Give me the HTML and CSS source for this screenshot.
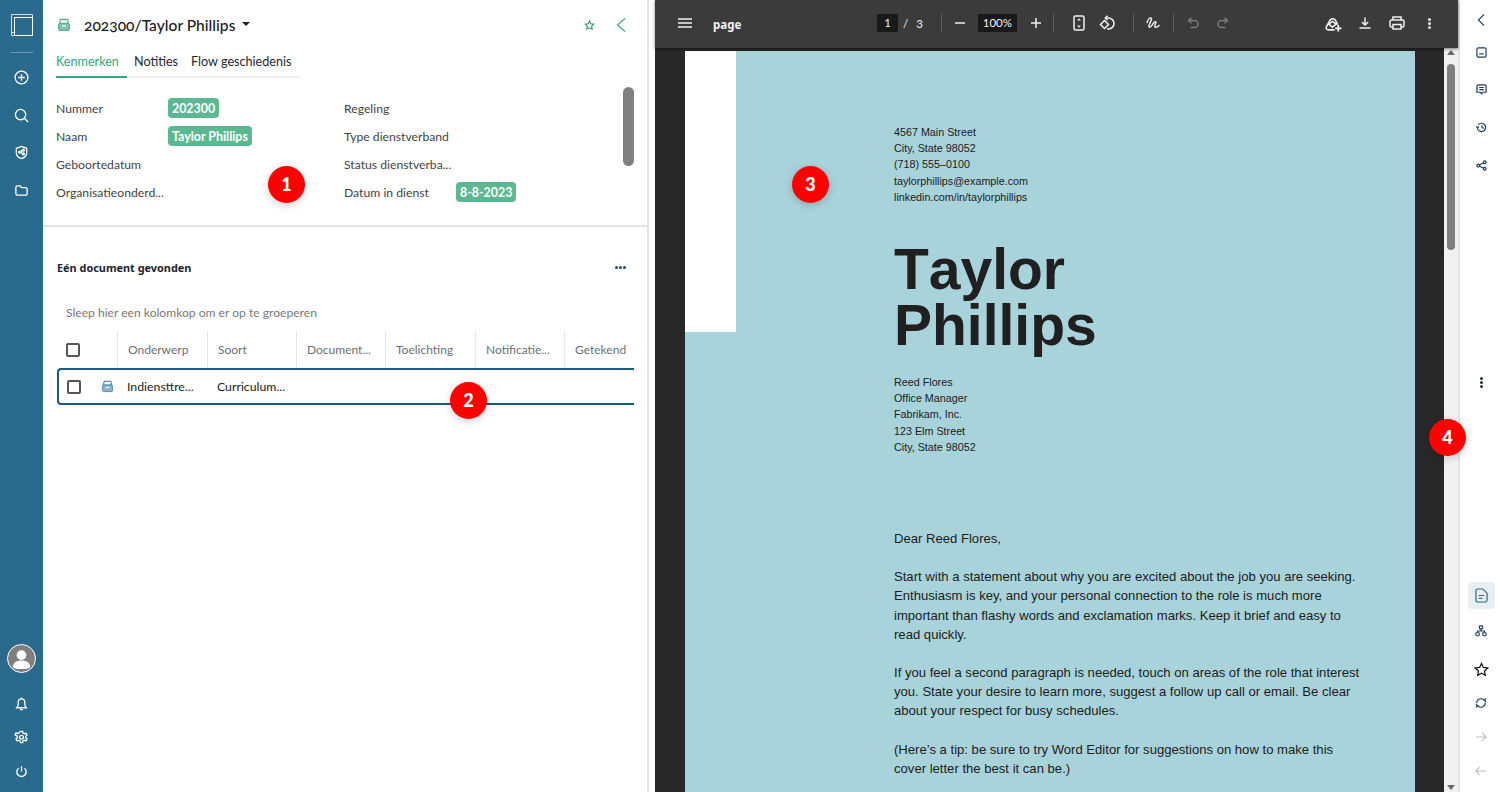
FILE: index.html
```html
<!DOCTYPE html>
<html lang="en">
<head>
    <meta charset="UTF-8">
    <title>202300/Taylor Phillips</title>
    <link rel="stylesheet" href="styles.css">
</head>
<body>
    <nav class="sidebar">
        <svg class="logo" viewBox="0 0 22 22" width="22" height="22"><path d="M.5 21.500V.5h21v21z M.5 18.500h3" fill="none" stroke="#cfe0e8" stroke-width="1"/><rect x="3.500" y="3.500" width="18" height="18" fill="none" stroke="#fff" stroke-width="1"/></svg>
        <div class="sidebar-rule"></div>
        <div class="sidebar-group">
            <svg class="side-icon" viewBox="0 0 16 16"><circle cx="8" cy="8" r="6.800"/><path d="M8 4.500v7M4.500 8h7"/></svg>
            <svg class="side-icon" viewBox="0 0 16 16"><circle cx="7" cy="7" r="5.500"/><path d="M11 11l4 4"/></svg>
            <svg class="side-icon" viewBox="0 0 16 16"><path d="M8 1.500l5.500 2v5c0 3-2.500 5-5.500 6-3-1-5.500-3-5.500-6v-5z"/><circle cx="10" cy="5.500" r="1"/><circle cx="6" cy="7.500" r="1"/><circle cx="10" cy="9.500" r="1"/><path d="M9 6L7 7M7 8l2 1"/></svg>
            <svg class="side-icon" viewBox="0 0 16 16"><path d="M2 4.500a1.500 1.500 0 0 1 1.500-1.500h3l1.500 2h4.500a1.500 1.500 0 0 1 1.500 1.500v5a1.500 1.500 0 0 1-1.500 1.500h-9a1.500 1.500 0 0 1-1.500-1.500z"/></svg>
        </div>
        <div class="sidebar-bottom">
            <div class="avatar">
                <svg viewBox="0 0 28 28" width="27" height="27"><circle cx="14" cy="10.500" r="5" fill="#fff"/><path d="M5 23c0-5 4-7 9-7s9 2 9 7c-2 1.500-5 2-9 2s-7-.5-9-2z" fill="#fff"/></svg>
            </div>
            <svg class="side-icon" viewBox="0 0 16 16"><path d="M3 12.500c1-1 1.500-2 1.500-4V6.500a3.500 3.500 0 0 1 7 0v2c0 2 .5 3 1.500 4z"/><path d="M6.500 14.500h3M8 1.500v1.500"/></svg>
            <svg class="side-icon" viewBox="0 0 16 16"><path d="M6.800 1.500h2.400l.4 1.900 1.300.7 1.800-.7 1.200 2.100-1.400 1.300v1.400l1.400 1.300-1.200 2.100-1.800-.7-1.300.7-.4 1.900H6.800l-.4-1.900-1.300-.7-1.800.7-1.200-2.100 1.400-1.300V6.500L1.100 5.200l1.200-2.100 1.800.7 1.300-.7z"/><circle cx="8" cy="7.800" r="2"/></svg>
            <svg class="side-icon" viewBox="0 0 16 16"><path d="M8 2.500V8M4.800 4.500a5 5 0 1 0 6.400 0"/></svg>
        </div>
    </nav>

    <main class="panel">
        <section class="details">
            <header class="title-row">
                <svg class="cabinet" viewBox="0 0 14 14" width="14" height="14"><path d="M3.500 1.500h7l1 4h-9z" fill="none" stroke="#5bb592" stroke-width="1.300"/><rect x="1.500" y="5.500" width="11" height="7" rx="1.500" fill="#7fc4aa" stroke="#5bb592"/><path d="M5 8h4" stroke="#fff" stroke-width="1.200"/></svg>
                <h1 class="title">202300/Taylor Phillips</h1>
                <span class="caret"></span>
                <span class="title-actions">
                    <svg viewBox="0 0 12 12" width="11" height="11"><path d="M6 1.200l1.400 3 3.300.4-2.400 2.200.6 3.300L6 8.500l-2.900 1.600.6-3.300L1.300 4.600l3.300-.4z" fill="none" stroke="#2f9a79" stroke-width="1.200"/></svg>
                    <svg viewBox="0 0 10 16" width="10" height="16"><path d="M9 1.500L1.500 8 9 14.500" fill="none" stroke="#3aa884" stroke-width="1.200"/></svg>
                </span>
            </header>
            <div class="tabs">
                <a class="tab tab-active">Kenmerken</a>
                <a class="tab">Notities</a>
                <a class="tab">Flow geschiedenis</a>
            </div>
            <div class="fields">
                <div class="field"><span class="field-label">Nummer</span><span class="tag">202300</span></div>
                <div class="field"><span class="field-label">Regeling</span></div>
                <div class="field"><span class="field-label">Naam</span><span class="tag">Taylor Phillips</span></div>
                <div class="field"><span class="field-label">Type dienstverband</span></div>
                <div class="field"><span class="field-label">Geboortedatum</span></div>
                <div class="field"><span class="field-label">Status dienstverba...</span></div>
                <div class="field"><span class="field-label">Organisatieonderd...</span></div>
                <div class="field"><span class="field-label">Datum in dienst</span><span class="tag">8-8-2023</span></div>
            </div>
            <div class="details-thumb"></div>
        </section>

        <section class="documents">
            <div class="docs-head">
                <h2 class="docs-title">Eén document gevonden</h2>
                <span class="dots"><i></i><i></i><i></i></span>
            </div>
            <p class="group-hint">Sleep hier een kolomkop om er op te groeperen</p>
            <div class="grid-head">
                <div class="col col-check"><span class="checkbox"></span></div>
                <div class="col">Onderwerp</div>
                <div class="col">Soort</div>
                <div class="col">Document...</div>
                <div class="col">Toelichting</div>
                <div class="col">Notificatie...</div>
                <div class="col">Getekend</div>
            </div>
            <div class="grid-row">
                <span class="checkbox"></span>
                <svg class="row-icon" viewBox="0 0 14 14" width="13" height="13"><path d="M3.500 1.500h7l1 4h-9z" fill="none" stroke="#4f8fae" stroke-width="1.300"/><rect x="1.500" y="5.500" width="11" height="7" rx="1.500" fill="#86b4ca" stroke="#4f8fae"/><path d="M5 8h4" stroke="#fff" stroke-width="1.200"/></svg>
                <span class="cell">Indiensttre...</span>
                <span class="cell">Curriculum...</span>
            </div>
        </section>
    </main>

    <div class="splitter"></div>

    <section class="viewer">
        <div class="pdf-bar">
            <svg class="pdf-icon menu-icon" viewBox="0 0 14 10"><path d="M0 1h14M0 5h14M0 9h14"/></svg>
            <span class="pdf-name">page</span>
            <span class="pdf-box">1</span>
            <span class="pdf-slash">/</span>
            <span class="pdf-total">3</span>
            <div class="pdf-sep sep-pages"></div>
            <svg class="pdf-icon tool-minus" viewBox="0 0 10 10"><path d="M0 5h10"/></svg>
            <span class="pdf-box pdf-zoom">100%</span>
            <svg class="pdf-icon tool-plus" viewBox="0 0 10 10"><path d="M0 5h10M5 0v10"/></svg>
            <div class="pdf-sep sep-zoom"></div>
            <svg class="pdf-icon tool-fit" viewBox="0 0 12 16"><rect x="1" y="1" width="10" height="14" rx="1.500"/><path d="M6 3.200L7.800 5.500H4.200zM6 12.800L7.800 10.500H4.200z" fill="#f1f1f1" stroke="none"/></svg>
            <svg class="pdf-icon tool-rotate" viewBox="0 0 16 16"><path d="M6.500 3h3a5.500 5.500 0 0 1 0 11H8"/><path d="M8.500 .8L6.300 3l2.200 2.200"/><path d="M5.500 5.500L9.500 9.500 5.500 13.500 1.500 9.500z"/></svg>
            <div class="pdf-sep sep-rotate"></div>
            <svg class="pdf-icon tool-draw" viewBox="0 0 16 16"><path d="M1 7.500C2 4 3.500 2 5 2s1 2-.5 5-2 5-.5 5 3-3.500 4.500-5 2.500-1 2 .5-2 4-.5 4.500 3-1 4.500-2.500"/></svg>
            <div class="pdf-sep sep-draw"></div>
            <svg class="pdf-icon pdf-dim tool-undo" viewBox="0 0 12 12"><path d="M4.500 .8L1.500 3.500l3 2.700"/><path d="M1.500 3.500h6a3.500 3.500 0 0 1 0 7H3.500"/></svg>
            <svg class="pdf-icon pdf-dim tool-redo" viewBox="0 0 12 12"><path d="M7.500 .8l3 2.700-3 2.700"/><path d="M10.500 3.500h-6a3.500 3.500 0 0 0 0 7H8.500"/></svg>
            <svg class="pdf-icon tool-shapes" viewBox="0 0 16 16"><path d="M9 14H3.500C1.500 14 .5 12.500 1.500 10.800L5 4.500a3 3 0 0 1 4.500 0L12 9"/><path d="M3.500 8.500L7 6l3.500 2.500L7 11.500z"/><path d="M12.500 9.500v6M9.500 12.500h6" stroke-width="1.700"/></svg>
            <svg class="pdf-icon tool-save" viewBox="0 0 12 12"><path d="M6 .5v7.500M2.800 5L6 8l3.200-3M.5 11h11"/></svg>
            <svg class="pdf-icon tool-print" viewBox="0 0 16 14"><path d="M4 4V1h8v3M4 11H2.500A1.500 1.500 0 0 1 1 9.500v-4A1.500 1.500 0 0 1 2.500 4h11A1.500 1.500 0 0 1 15 5.500v4a1.500 1.500 0 0 1-1.500 1.500H12"/><rect x="4" y="8.500" width="8" height="4.500"/></svg>
            <span class="pdf-kebab"><i></i><i></i><i></i></span>
        </div>

        <div class="pdf-body">
            <div class="pdf-canvas">
                <article class="sheet">
                    <div class="sheet-corner"></div>
                    <div class="sheet-text">
                        <p class="address">4567 Main Street<br>City, State 98052<br>(718) 555–0100<br>taylorphillips@example.com<br>linkedin.com/in/taylorphillips</p>
                        <h2 class="sheet-name">Taylor<br>Phillips</h2>
                        <p class="address recipient">Reed Flores<br>Office Manager<br>Fabrikam, Inc.<br>123 Elm Street<br>City, State 98052</p>
                        <p class="letter greeting">Dear Reed Flores,</p>
                        <p class="letter">Start with a statement about why you are excited about the job you are seeking. Enthusiasm is key, and your personal connection to the role is much more important than flashy words and exclamation marks. Keep it brief and easy to read quickly.</p>
                        <p class="letter">If you feel a second paragraph is needed, touch on areas of the role that interest you. State your desire to learn more, suggest a follow up call or email. Be clear about your respect for busy schedules.</p>
                        <p class="letter">(Here’s a tip: be sure to try Word Editor for suggestions on how to make this cover letter the best it can be.)</p>
                    </div>
                </article>
            </div>
            <div class="pdf-scroll">
                <span class="arrow-up"></span>
                <span class="pdf-thumb"></span>
                <span class="arrow-down"></span>
            </div>
        </div>
    </section>

    <aside class="rail">
        <div class="rail-group">
            <svg class="rail-icon rail-back" viewBox="0 0 10 16"><path d="M8.500 1.500L2 8l6.500 6.500"/></svg>
            <svg class="rail-icon small" viewBox="0 0 12 12"><rect x="1" y="1" width="10" height="10" rx="1.500"/><path d="M3.500 7.500h5"/></svg>
            <svg class="rail-icon small" viewBox="0 0 12 12"><path d="M1 2.500A1.500 1.500 0 0 1 2.500 1h7A1.500 1.500 0 0 1 11 2.500V9H7.200L6 10.800 4.800 9H1z"/><path d="M3.500 3.800h5M3.500 6.200h5"/></svg>
            <svg class="rail-icon small" viewBox="0 0 12 12"><path d="M2.500 3a4.500 4.500 0 1 1-1 3.500M.3 4.800l1.400 1.500 1.500-1.400M6.500 3.500V6l1.800 1.200"/></svg>
            <svg class="rail-icon small" viewBox="0 0 12 12"><circle cx="2.500" cy="6" r="1.500"/><circle cx="9.500" cy="2.500" r="1.500"/><circle cx="9.500" cy="9.500" r="1.500"/><path d="M4 5.200l4-2M4 6.800l4 2"/></svg>
        </div>
        <span class="rail-kebab"><i></i><i></i><i></i></span>
        <div class="rail-group rail-bottom">
            <span class="rail-active"><svg class="rail-icon doc" viewBox="0 0 14 16"><path d="M3 1h5.500L13 5.500V12.500a2.500 2.500 0 0 1-2.500 2.500H3A2 2 0 0 1 1 13V3a2 2 0 0 1 2-2z"/><path d="M4 8h6M4 11h4"/></svg></span>
            <svg class="rail-icon wide" viewBox="0 0 14 14"><rect x="5" y="1" width="4" height="3.500" rx="1"/><rect x="1" y="9" width="4" height="3.500" rx="1"/><rect x="9" y="9" width="4" height="3.500" rx="1"/><path d="M7 4.500V7M3 9V7h8v2"/></svg>
            <svg class="rail-icon star" viewBox="0 0 16 16"><path d="M8 1.500l2 4.300 4.700.6-3.500 3.200.9 4.700L8 12l-4.100 2.300.9-4.700L1.300 6.400 6 5.800z"/></svg>
            <svg class="rail-icon wide" viewBox="0 0 14 14"><path d="M2 7a5 5 0 0 1 8.500-3.500L12 5V1.500M12 7a5 5 0 0 1-8.500 3.500L2 9v3.500"/></svg>
            <svg class="rail-icon wide rail-off" viewBox="0 0 14 14"><path d="M1 7h12M8.500 2.500L13 7l-4.500 4.500"/></svg>
            <svg class="rail-icon wide rail-off" viewBox="0 0 14 14"><path d="M13 7H1M5.500 2.500L1 7l4.500 4.500"/></svg>
        </div>
    </aside>

    <span class="marker marker-1">1</span>
    <span class="marker marker-2">2</span>
    <span class="marker marker-3">3</span>
    <span class="marker marker-4">4</span>
</body>
</html>
```

FILE: styles.css
```css
* {
    box-sizing: border-box;
}

html,
body {
    height: 100%;
}

body {
    margin: 0;
    display: flex;
    overflow: hidden;
    font-family: Lato, "Noto Sans", sans-serif;
    background: #fff;
    color: #111;
}

h1,
h2,
p {
    margin: 0;
    font-weight: normal;
}

/* Left navigation */
.sidebar {
    width: 43px;
    flex: none;
    display: flex;
    flex-direction: column;
    align-items: center;
    padding-top: 14px;
    background: #2a6a8c;
}

.sidebar-rule {
    width: 22px;
    height: 1px;
    margin-top: 16px;
    background: #6f9db5;
}

.sidebar-group {
    display: flex;
    flex-direction: column;
    gap: 22.600px;
    margin-top: 17px;
}

.sidebar-bottom {
    margin-top: auto;
    display: flex;
    flex-direction: column;
    align-items: center;
    gap: 19px;
    padding-bottom: 13px;
}

.side-icon {
    display: block;
    width: 15px;
    height: 15px;
    fill: none;
    stroke: #fff;
    stroke-width: 1.400;
}

.avatar {
    width: 29px;
    height: 29px;
    margin-bottom: 4px;
    border: 1px solid #fff;
    border-radius: 50%;
    background: #7f7f7f;
    overflow: hidden;
}

.avatar svg {
    display: block;
}

/* Left panel */
.panel {
    width: 606px;
    flex: none;
    display: flex;
    flex-direction: column;
    border-right: 2px solid #e4e4e4;
}

.details {
    position: relative;
    height: 227px;
    flex: none;
    padding: 0 13px;
    border-bottom: 2px solid #e2e2e2;
}

.title-row {
    display: flex;
    align-items: center;
    height: 50px;
}

.cabinet {
    margin-left: 1px;
}

.title {
    margin-left: 13px;
    font-size: 15.600px;
    font-weight: 500;
    font-variant-numeric: oldstyle-nums;
    color: #1c1c1c;
}

.caret {
    margin-left: 7px;
    margin-bottom: 2px;
    border: 4px solid transparent;
    border-top-color: #222;
    border-bottom-width: 0;
}

.title-actions {
    margin-left: auto;
    margin-right: 8.500px;
    display: flex;
    align-items: center;
    gap: 20.500px;
}

.tabs {
    display: flex;
    width: 244px;
    height: 28px;
    border-bottom: 2px solid #f0f0f0;
    white-space: nowrap;
}

.tab {
    flex: none;
    height: 28px;
    margin-right: 13px;
    padding-top: 4px;
    font-size: 12.600px;
    color: #1d2733;
}

.tab-active {
    width: 71px;
    margin-right: 7px;
    color: #35a57f;
    border-bottom: 2px solid #35a57f;
}

.fields {
    display: grid;
    grid-template-columns: 288px 1fr;
    grid-auto-rows: 28px;
    margin-top: 16px;
}

.field {
    display: flex;
    align-items: center;
    font-size: 12.200px;
    color: #444;
}

.field-label {
    width: 112px;
    white-space: nowrap;
}

.tag {
    height: 20px;
    padding: 4px 4px 2px;
    border-radius: 4px;
    font-size: 12.400px;
    font-weight: 700;
    line-height: 14px;
    color: #fff;
    background: #5cb891;
}

.details-thumb {
    position: absolute;
    top: 87px;
    right: 13px;
    width: 11px;
    height: 79px;
    border-radius: 6px;
    background: #808080;
}

.documents {
    padding: 0 13px;
}

.docs-head {
    display: flex;
    align-items: center;
    justify-content: space-between;
    height: 78px;
    padding-bottom: 1px;
    padding-top: 3px;
    padding-left: 1px;
    padding-right: 8px;
}

.docs-title {
    font-family: "Noto Sans", sans-serif;
    font-size: 10.900px;
    font-weight: 700;
    color: #1c2430;
}

.dots,
.pdf-kebab,
.rail-kebab {
    display: flex;
    gap: 1px;
}

.dots i {
    width: 3px;
    height: 3px;
    border-radius: 50%;
    background: #24476b;
}

.group-hint {
    padding-left: 10px;
    font-size: 12.100px;
    line-height: 16px;
    color: #77797d;
}

.grid-head {
    display: grid;
    grid-template-columns: 61px 90px 89px 89px 90px 89px 70px;
    height: 37px;
    margin-top: 10px;
}

.col {
    display: flex;
    align-items: center;
    padding-left: 10px;
    border-left: 1px solid #e6e6e6;
    font-size: 12px;
    color: #6c6f75;
    white-space: nowrap;
}

.col-check {
    padding-left: 10px;
    border-left: 0;
}

.checkbox {
    width: 14px;
    height: 14px;
    flex: none;
    border: 2px solid #555;
    border-radius: 2px;
}

.grid-row {
    display: flex;
    align-items: center;
    width: 577px;
    height: 37px;
    margin-left: 1px;
    padding-left: 8px;
    border: 2px solid #1d5a80;
    border-right: 0;
    border-radius: 4px 0 0 4px;
}

.row-icon {
    margin-left: 20px;
}

.cell {
    width: 90px;
    font-size: 12.300px;
    color: #1c1c1c;
    white-space: nowrap;
}

.row-icon + .cell {
    margin-left: 13px;
}

.splitter {
    width: 6px;
    flex: none;
    background: #fff;
}

/* PDF viewer */
.viewer {
    width: 803px;
    flex: none;
    display: flex;
    flex-direction: column;
    background: #282828;
}

.pdf-bar {
    display: flex;
    align-items: center;
    height: 48px;
    flex: none;
    padding-left: 23px;
    padding-bottom: 2px;
    font-size: 11.500px;
    color: #f1f1f1;
    background: #3b3b3b;
    box-shadow: 0 1px 3px rgba(0, 0, 0, 0.5);
    z-index: 1;
}

.pdf-icon {
    width: 14px;
    height: 14px;
    flex: none;
    fill: none;
    stroke: #f1f1f1;
    stroke-width: 1.500;
}

.menu-icon {
    height: 10px;
}

.pdf-name {
    width: 164px;
    margin-left: 21px;
    padding-top: 2px;
    font-family: "Noto Sans", sans-serif;
    font-weight: 700;
}

.pdf-box {
    display: inline-block;
    width: 21px;
    height: 18px;
    line-height: 18px;
    text-align: center;
    background: #191919;
}

.pdf-slash {
    margin-left: 5px;
}

.pdf-total {
    margin-left: 8px;
}

.pdf-zoom {
    width: 39px;
    margin-left: 13px;
}

.pdf-sep {
    width: 1px;
    height: 18px;
    flex: none;
    background: #5c5c5c;
}

/* toolbar items sit at fixed distances from each other, as in the viewer */
.sep-pages {
    margin-left: 18px;
}

.tool-minus {
    width: 10px;
    height: 10px;
    margin-left: 13px;
}

.tool-plus {
    width: 10px;
    height: 10px;
    margin-left: 14px;
}

.sep-zoom {
    margin-left: 12px;
}

.tool-fit {
    width: 12px;
    height: 16px;
    margin-left: 19px;
}

.tool-rotate {
    width: 16px;
    height: 16px;
    margin-left: 14px;
}

.sep-rotate {
    margin-left: 18px;
}

.tool-draw {
    width: 15px;
    height: 15px;
    margin-left: 12px;
}

.sep-draw {
    margin-left: 12px;
}

.pdf-dim {
    stroke: #7a7a7a;
}

.tool-undo {
    width: 12px;
    height: 12px;
    margin-left: 13px;
}

.tool-redo {
    width: 12px;
    height: 12px;
    margin-left: 18px;
}

.tool-shapes {
    width: 17px;
    height: 17px;
    margin-left: 96px;
}

.tool-save {
    width: 12px;
    height: 12px;
    margin-left: 17px;
}

.tool-print {
    width: 16px;
    height: 14px;
    margin-left: 18px;
}

.pdf-kebab {
    margin-left: 23px;
}

.pdf-kebab,
.rail-kebab {
    flex-direction: column;
}

.pdf-kebab i,
.rail-kebab i {
    width: 3px;
    height: 3px;
    border-radius: 50%;
    background: #f1f1f1;
}

.pdf-body {
    flex: 1;
    min-height: 0;
    display: flex;
}

.pdf-canvas {
    flex: 1;
    min-width: 0;
    padding: 3px 29px 0 30px;
    overflow: hidden;
}

.sheet {
    display: flex;
    width: 730px;
    height: 1040px;
    background: #a9d3da;
    font-family: "Liberation Sans", Arial, sans-serif;
    color: #1b1b1b;
}

.sheet-corner {
    width: 51px;
    height: 281px;
    flex: none;
    background: #fff;
}

.sheet-text {
    width: 470px;
    margin-left: 158px;
    padding-top: 73px;
}

.address {
    font-size: 10.750px;
    line-height: 16.200px;
}

.sheet-name {
    margin-top: 36px;
    font-size: 57px;
    font-weight: 700;
    font-kerning: none;
    line-height: 56px;
    color: #202020;
}

.recipient {
    margin-top: 21px;
}

.letter {
    margin-bottom: 19px;
    font-size: 13.100px;
    line-height: 19.200px;
}

.greeting {
    margin-top: 74px;
}

.pdf-scroll {
    position: relative;
    width: 14px;
    flex: none;
    background: #f1f1f1;
}

.pdf-thumb {
    position: absolute;
    top: 16px;
    left: 3px;
    width: 8px;
    height: 186px;
    border-radius: 4px;
    background: #7f7f7f;
}

.arrow-up,
.arrow-down {
    position: absolute;
    left: 3px;
    border: 4px solid transparent;
}

.arrow-up {
    top: 2px;
    border-top: 0;
    border-bottom: 5px solid #6a6a6a;
}

.arrow-down {
    bottom: 2px;
    border-bottom: 0;
    border-top: 5px solid #6a6a6a;
}

/* Right rail */
.rail {
    flex: 1;
    min-width: 0;
    display: flex;
    flex-direction: column;
    align-items: center;
    padding-left: 2px;
    border-left: 2px solid #e4e4e4;
}

.rail-group {
    display: flex;
    flex-direction: column;
    align-items: center;
    gap: 26.700px;
    padding-top: 13px;
}

.rail-icon {
    display: block;
    width: 10px;
    height: 14px;
    fill: none;
    stroke: #1f3b5c;
    stroke-width: 1.300;
}

.rail-back {
    margin-bottom: -7px;
}

.rail-icon.small {
    width: 11px;
    height: 11px;
}

.rail-icon.wide {
    width: 12px;
    height: 12px;
}

.rail-icon.star {
    width: 15px;
    height: 15px;
    margin-top: 3px;
    margin-bottom: -2px;
    stroke: #111;
}

.rail-icon.doc {
    width: 13px;
    height: 15px;
    stroke: #2a6a8c;
}

.rail-icon.rail-off {
    stroke: #bdbdbd;
}

.rail-kebab {
    margin-top: 206px;
}

.rail-kebab i {
    background: #1f2f45;
}

.rail-group.rail-bottom {
    margin-top: auto;
    gap: 22px;
    padding-top: 0;
    padding-bottom: 15px;
}

.rail-active {
    display: flex;
    align-items: center;
    justify-content: center;
    width: 27px;
    height: 27px;
    margin-bottom: -6px;
    border-radius: 4px;
    background: #e8eff3;
}

/* Numbered callouts over the screenshot */
.marker {
    position: absolute;
    width: 37px;
    height: 37px;
    border-radius: 50%;
    font-family: Lato, sans-serif;
    font-size: 18px;
    font-weight: 900;
    line-height: 37px;
    text-align: center;
    color: #fff;
    background: #f00;
    box-shadow: 0 2px 8px rgba(0, 0, 0, 0.2);
}

.marker-1 {
    left: 268px;
    top: 166px;
}

.marker-2 {
    left: 450px;
    top: 382px;
}

.marker-3 {
    left: 792px;
    top: 166px;
}

.marker-4 {
    left: 1429px;
    top: 419px;
}
```
